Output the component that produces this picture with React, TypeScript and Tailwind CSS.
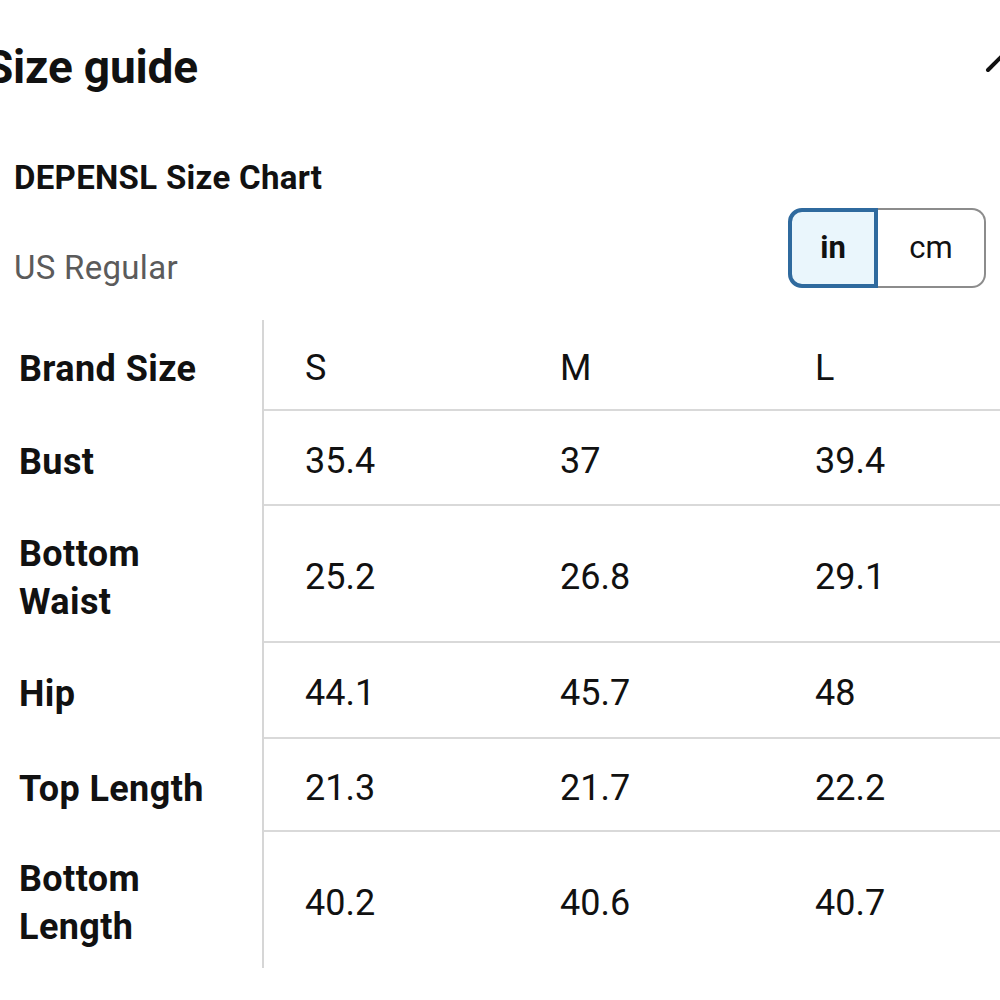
const rows: { label: string[]; values: string[]; h: string }[] = [
  { label: ["Brand Size"], values: ["S", "M", "L"], h: "h-[91px]" },
  { label: ["Bust"], values: ["35.4", "37", "39.4"], h: "h-[95px]" },
  { label: ["Bottom", "Waist"], values: ["25.2", "26.8", "29.1"], h: "h-[137px]" },
  { label: ["Hip"], values: ["44.1", "45.7", "48"], h: "h-[96px]" },
  { label: ["Top Length"], values: ["21.3", "21.7", "22.2"], h: "h-[93px]" },
  { label: ["Bottom", "Length"], values: ["40.2", "40.6", "40.7"], h: "h-[136px]" },
];

export default function App() {
  return (
    <div className="relative w-[1000px] h-[1000px] overflow-hidden bg-white text-[#111] font-['Roboto',sans-serif]">
      {/* close button, mostly off screen */}
      <svg className="absolute left-[980px] top-[48px]" width="30" height="30" viewBox="0 0 30 30">
        <line x1="8" y1="22" x2="24" y2="6" stroke="#111" strokeWidth="4" strokeLinecap="round" />
      </svg>

      <div className="h-[124px] flex items-center">
        <h1 className="-ml-[15px] pt-[9px] text-[46px] font-bold leading-none tracking-[-0.2px]">Size guide</h1>
      </div>

      <div className="flex justify-between pl-[14px] pr-[14px] h-[196px]">
        <div className="flex flex-col">
          <h2 className="mt-[37px] text-[33px] font-bold leading-none tracking-[0.3px]">DEPENSL Size Chart</h2>
          <p className="mt-[57px] text-[33px] leading-none tracking-[0.3px] text-[#5b5b5b]">US Regular</p>
        </div>
        <div className="mt-[84px] flex h-[80px]">
          <button className="w-[90px] h-full rounded-l-[14px] border-[4px] border-[#2f6a9e] bg-[#eaf6fc] text-[31px] font-bold">
            in
          </button>
          <button className="w-[108px] h-full rounded-r-[14px] border-2 border-l-0 border-[#8c8c8c] bg-white text-[31px]">
            cm
          </button>
        </div>
      </div>

      <div className="grid grid-cols-[262px_1fr]">
        <div className="flex flex-col">
          {rows.map((r, i) => (
            <div
              key={i}
              className={`${r.h} flex flex-col justify-center pl-[19px] pt-[6px] text-[36px] font-bold leading-[48px] tracking-[0.4px]`}
            >
              {r.label.map((l) => (
                <span key={l}>{l}</span>
              ))}
            </div>
          ))}
        </div>
        <div className="flex flex-col border-l-2 border-[#d6d6d6]">
          {rows.map((r, i) => (
            <div
              key={i}
              className={`${r.h} grid grid-cols-[255px_255px_1fr] items-center pt-[6px] text-[36px] leading-none ${
                i < rows.length - 1 ? "border-b-2 border-[#d9d9d9]" : ""
              }`}
            >
              {r.values.map((v, j) => (
                <span key={j} className="pl-[41px]">
                  {v}
                </span>
              ))}
            </div>
          ))}
        </div>
      </div>
    </div>
  );
}
